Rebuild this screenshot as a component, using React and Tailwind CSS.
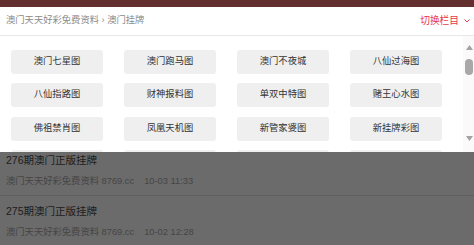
/**
 * Macau listing page with the "switch column" dropdown opened over the list.
 */

const fontStack = { fontFamily: '"Liberation Sans", "Noto Sans CJK SC", sans-serif' };

const columns = [
  '澳门七星图', '澳门跑马图', '澳门不夜城', '八仙过海图',
  '八仙指路图', '财神报料图', '单双中特图', '赌王心水图',
  '佛祖禁肖图', '凤凰天机图', '新管家婆图', '新挂牌彩图',
];

const posts = [
  { id: 276, date: '10-03 11:33' },
  { id: 275, date: '10-02 12:28' },
];

function ScrollTrack() {
  return (
    <div className="flex w-[11px] flex-col items-center bg-[#fafafa] pt-[9px] pb-[11px]">
      <svg width="7" height="5" viewBox="0 0 7 5" className="ml-[1px]">
        <polygon points="3.5,0 7,5 0,5" fill="#a3a3a3" />
      </svg>
      <div className="ml-[1px] mt-[9px] h-[16px] w-[8px] rounded-[4px] bg-[#a8a8a8]" />
      <svg width="7" height="5" viewBox="0 0 7 5" className="ml-[1px] mt-auto">
        <polygon points="0,0 7,0 3.5,5" fill="#a3a3a3" />
      </svg>
    </div>
  );
}

function ColumnPanel() {
  return (
    <div className="absolute left-0 right-0 top-0 z-10 flex h-[116px] overflow-hidden bg-white">
      <div className="flex-1 overflow-hidden">
        <div className="grid grid-cols-[repeat(4,92px)] gap-x-[21px] gap-y-[9.4px] pl-[11px] pt-[14px]">
          {columns.map((name) => (
            <div
              key={name}
              className="flex h-[24px] items-center justify-center rounded-[3px] bg-[#efefef] text-[9.3px] text-[#333]"
            >
              {name}
            </div>
          ))}
          {/* next row, peeking in at the bottom edge */}
          {[0, 1, 2, 3].map((i) => (
            <div key={i} className="h-[24px] rounded-[3px] bg-[#efefef]" />
          ))}
        </div>
      </div>
      <ScrollTrack />
    </div>
  );
}

function PostRow({ post }) {
  return (
    <div className="border-b border-[#e5e5e5] px-[6px] pt-[6px] pb-[6px]">
      <p className="text-[10.5px] leading-[18px] text-[#4a4a4a]">{post.id}期澳门正版挂牌</p>
      <div className="mt-[4px] flex text-[9.3px] leading-[16px] text-[#a6a6a6]">
        <span>澳门天天好彩免费资料 8769.cc</span>
        <span className="ml-[10px]">{post.date}</span>
      </div>
    </div>
  );
}

export default function App() {
  return (
    <div className="relative h-[245px] w-[474px] overflow-hidden bg-white" style={fontStack}>
      {/* Top bar, title scrolled out of view */}
      <div className="h-[7px] bg-[#632f2f]" />

      {/* Breadcrumb */}
      <div className="flex h-[29px] items-center justify-between border-b border-[#e8e8e8] pl-[6px] pr-[4px]">
        <span className="text-[9.3px] text-[#8a8a8a]">澳门天天好彩免费资料 › 澳门挂牌</span>
        <span className="flex items-center text-[9.7px] text-[#e6374b]">
          切换栏目
          <svg width="6" height="4" viewBox="0 0 6 4" className="ml-[5px] mt-[1px]">
            <polyline points="0.5,0.5 3,3 5.5,0.5" fill="none" stroke="#e6374b" strokeWidth="1" />
          </svg>
        </span>
      </div>

      {/* List with dropdown opened over it */}
      <div className="relative h-[209px]">
        <div className="pt-[109px]">
          {posts.map((post) => (
            <PostRow key={post.id} post={post} />
          ))}
        </div>
        <div className="absolute inset-0 bg-black/[0.58]" />
        <ColumnPanel />
      </div>
    </div>
  );
}
